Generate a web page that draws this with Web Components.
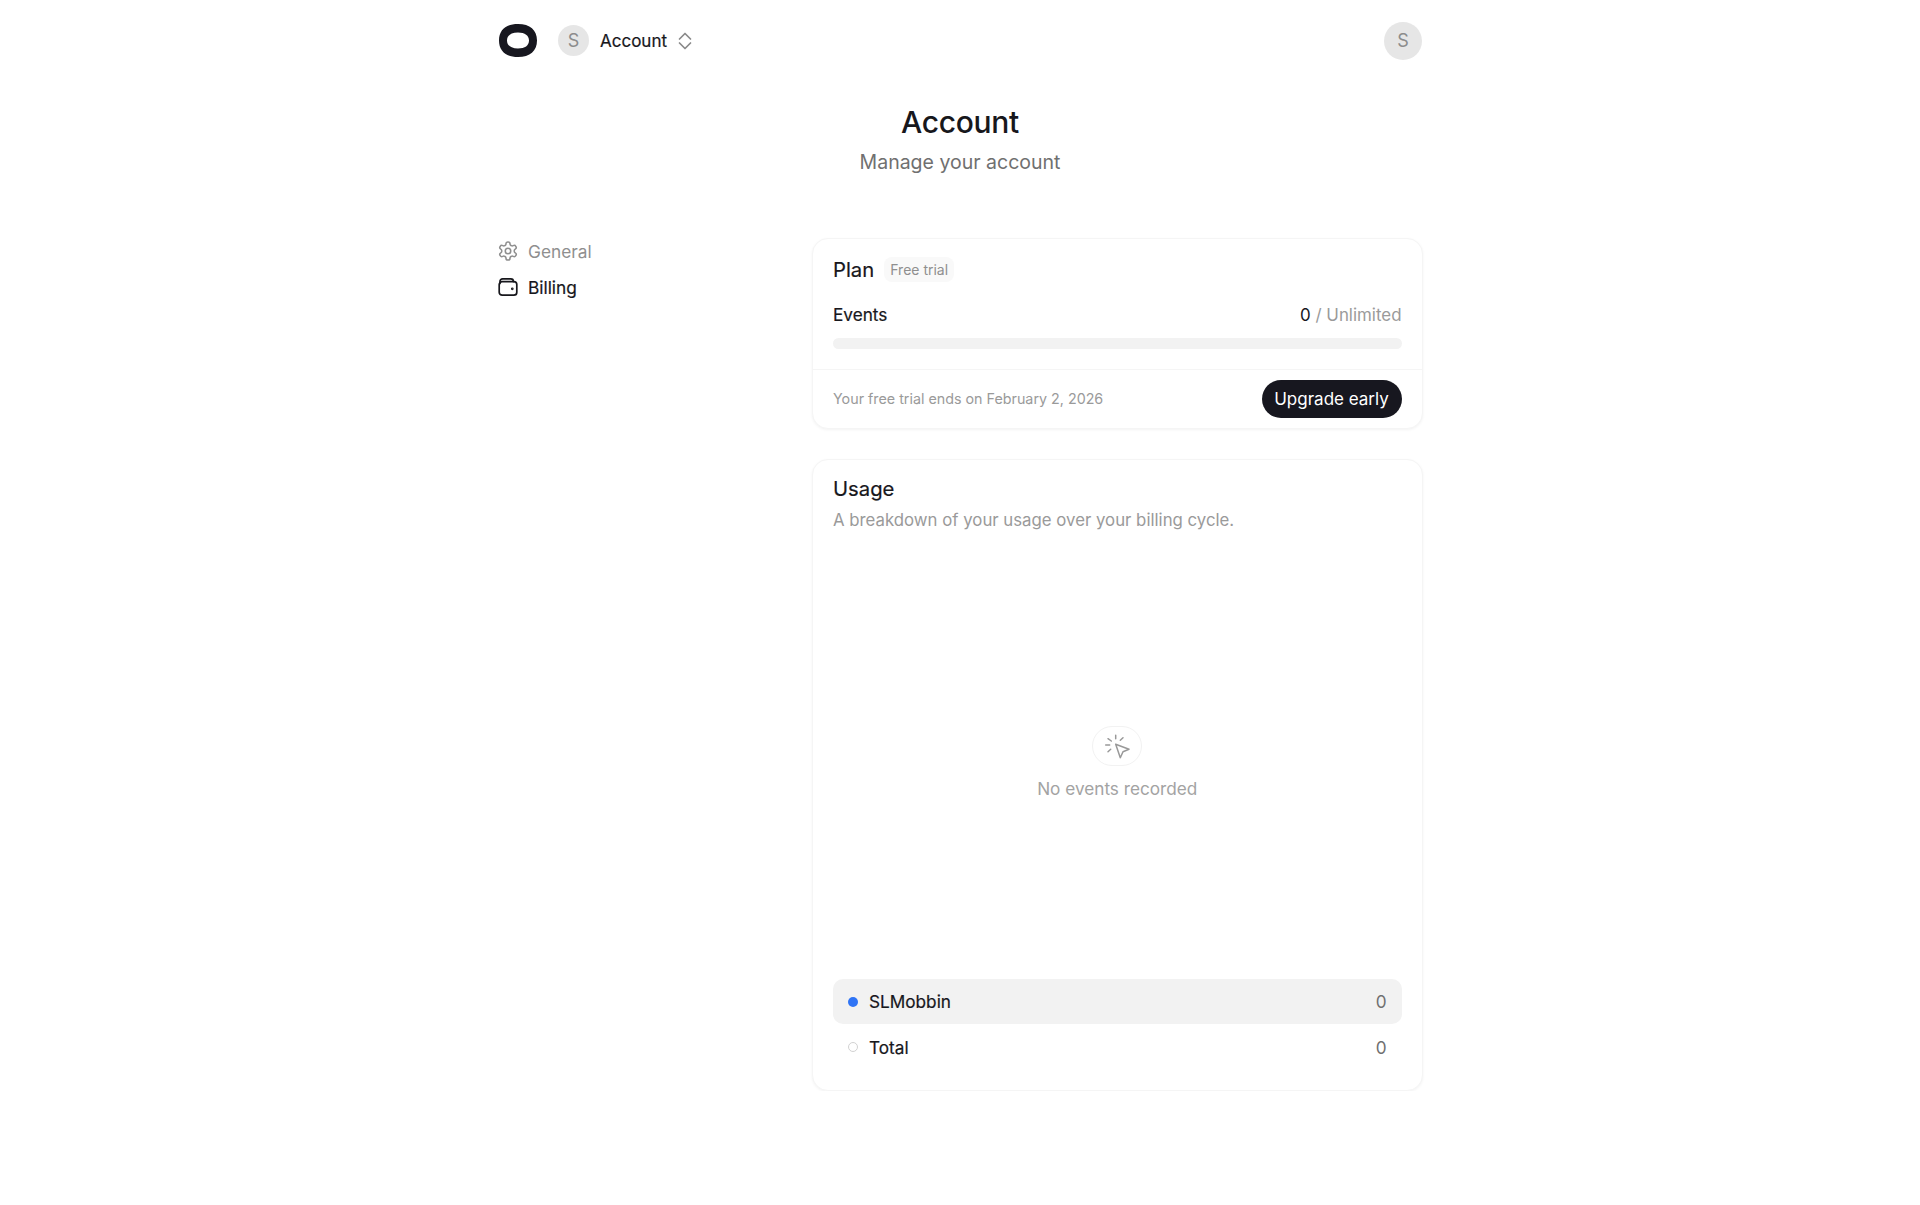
<!DOCTYPE html>
<html>
<head>
<meta charset="utf-8">
<title>Account</title>
<style>
  html, body { margin: 0; background: #fff; }
  body { font-family: Inter, "Liberation Sans", sans-serif; color: #17171c; }
</style>
</head>
<body>
<account-page></account-page>
<script>
class UserAvatar extends HTMLElement {
  constructor() {
    super();
    const size = this.getAttribute("size") || 30;
    this.attachShadow({ mode: "open" }).innerHTML = `
      <style>
        :host {
          display: inline-flex;
          align-items: center;
          justify-content: center;
          width: ${size}px;
          height: ${size}px;
          border-radius: 50%;
          background: #e6e6e6;
          color: #8c8c8c;
          font-size: 18px;
          flex: none;
        }
      </style>
      <slot></slot>
    `;
  }
}
customElements.define("user-avatar", UserAvatar);

class TopBar extends HTMLElement {
  constructor() {
    super();
    this.attachShadow({ mode: "open" }).innerHTML = `
      <style>
        :host {
          display: flex;
          align-items: center;
          height: 81px;
        }
        .logo { width: 38px; height: 33px; flex: none; margin: 0 21px 0 1px; }
        .name { font-size: 17px; margin-left: 11px; -webkit-text-stroke: 0.2px; }
        .chevrons { width: 14px; height: 18px; margin-left: 11px; flex: none; }
        .spacer { flex: 1; }
      </style>
      <svg class="logo" viewBox="0 0 38 33"><path fill="#17171f" fill-rule="evenodd" d="M19 0C31 0 38 6 38 16.500S31 33 19 33 0 27 0 16.500 7 0 19 0ZM19 8.500C12 8.500 8 11.500 8 16.500S12 24.500 19 24.500 30 21.500 30 16.500 26 8.500 19 8.500Z"/></svg>
      <user-avatar size="31">S</user-avatar>
      <span class="name">Account</span>
      <svg class="chevrons" viewBox="0 0 14 18" fill="none" stroke="#8a8a8a" stroke-width="1.700" stroke-linecap="round" stroke-linejoin="round"><path d="M1.500 7 7 1.500 12.500 7M1.500 11 7 16.500 12.500 11"/></svg>
      <span class="spacer"></span>
      <user-avatar size="38">S</user-avatar>
    `;
  }
}
customElements.define("top-bar", TopBar);

class SideNav extends HTMLElement {
  constructor() {
    super();
    this.attachShadow({ mode: "open" }).innerHTML = `
      <style>
        :host {
          display: flex;
          flex-direction: column;
          font-size: 17.300px;
          margin-top: -5px;
        }
        .item { display: flex; align-items: center; height: 36px; gap: 10px; color: #8f8f8f; }
        .item.active { color: #17171c; -webkit-text-stroke: 0.2px; }
        svg { width: 20px; height: 20px; flex: none; fill: none; stroke: currentColor; stroke-width: 1.700; stroke-linecap: round; stroke-linejoin: round; }
      </style>
      <div class="item">
        <svg viewBox="1 1 22 22"><path d="M12.220 2h-.44a2 2 0 0 0-2 2v.18a2 2 0 0 1-1 1.730l-.43.25a2 2 0 0 1-2 0l-.15-.08a2 2 0 0 0-2.730.73l-.22.38a2 2 0 0 0 .73 2.730l.15.1a2 2 0 0 1 1 1.720v.51a2 2 0 0 1-1 1.740l-.15.09a2 2 0 0 0-.73 2.730l.22.38a2 2 0 0 0 2.730.73l.15-.08a2 2 0 0 1 2 0l.43.25a2 2 0 0 1 1 1.730V20a2 2 0 0 0 2 2h.44a2 2 0 0 0 2-2v-.18a2 2 0 0 1 1-1.730l.43-.25a2 2 0 0 1 2 0l.15.08a2 2 0 0 0 2.730-.73l.22-.39a2 2 0 0 0-.73-2.730l-.15-.08a2 2 0 0 1-1-1.740v-.5a2 2 0 0 1 1-1.740l.15-.09a2 2 0 0 0 .73-2.730l-.22-.38a2 2 0 0 0-2.730-.73l-.15.08a2 2 0 0 1-2 0l-.43-.25a2 2 0 0 1-1-1.730V4a2 2 0 0 0-2-2z"/><circle cx="12" cy="12" r="3"/></svg>
        General
      </div>
      <div class="item active">
        <svg viewBox="0 0 20 20"><rect x="1.200" y="4.600" width="17.600" height="13.600" rx="3"/><path d="M2 6.500V4.400A2.600 2.600 0 0 1 4.600 1.800h8.200A2.600 2.600 0 0 1 15.400 4.400v.2"/><circle cx="14.300" cy="11.800" r=".5" fill="currentColor"/></svg>
        Billing
      </div>
    `;
  }
}
customElements.define("side-nav", SideNav);

class PanelCard extends HTMLElement {
  constructor() {
    super();
    this.attachShadow({ mode: "open" }).innerHTML = `
      <style>
        :host {
          display: flex;
          flex-direction: column;
          background: #fff;
          border: 1px solid #f5f5f5;
          border-radius: 16px;
          box-shadow: 0 1px 3px rgba(0, 0, 0, 0.05);
          box-sizing: border-box;
        }
      </style>
      <slot></slot>
    `;
  }
}
customElements.define("panel-card", PanelCard);

class PlanCard extends HTMLElement {
  constructor() {
    super();
    this.attachShadow({ mode: "open" }).innerHTML = `
      <style>
        :host { display: block; }
        panel-card { height: 191px; }
        .body { padding: 0 20px; flex: 1; }
        .title-row { display: flex; align-items: center; height: 30px; margin-top: 15px; gap: 10px; }
        .title { font-size: 20.300px; -webkit-text-stroke: 0.2px; }
        .badge { font-size: 14px; color: #8f8f8f; background: #f9f9f9; border-radius: 8px; padding: 4px 6px; margin-top: 1px; }
        .events { display: flex; justify-content: space-between; align-items: baseline; font-size: 16.900px; height: 24px; margin-top: 20px; }
        .events .label { font-size: 17.200px; -webkit-text-stroke: 0.2px; }
        .muted { color: #9a9a9a; }
        .bar { height: 11px; border-radius: 6px; background: #f2f2f2; margin-top: 10px; }
        .foot { display: flex; justify-content: space-between; align-items: center; height: 59px; padding: 0 20px; border-top: 1px solid #f5f5f5; box-sizing: border-box; }
        .note { font-size: 14.300px; color: #9a9a9a; margin-top: -2px; }
        .button { display: flex; align-items: center; justify-content: center; height: 38px; width: 140px; border-radius: 19px; background: #17171f; color: #fff; font-size: 17px; }
      </style>
      <panel-card>
        <div class="body">
          <div class="title-row"><span class="title">Plan</span><span class="badge">Free trial</span></div>
          <div class="events"><span class="label">Events</span><span>0 <span class="muted">/ Unlimited</span></span></div>
          <div class="bar"></div>
        </div>
        <div class="foot">
          <span class="note">Your free trial ends on February 2, 2026</span>
          <span class="button">Upgrade early</span>
        </div>
      </panel-card>
    `;
  }
}
customElements.define("plan-card", PlanCard);

class LegendRow extends HTMLElement {
  constructor() {
    super();
    const active = this.hasAttribute("active");
    this.attachShadow({ mode: "open" }).innerHTML = `
      <style>
        :host {
          display: flex;
          align-items: center;
          height: ${active ? 45 : 46}px;
          padding: 0 15px;
          border-radius: 10px;
          font-size: 17.200px;
          background: ${active ? "#f2f2f2" : "transparent"};
        }
        .dot { width: 10px; height: 10px; border-radius: 50%; box-sizing: border-box; margin-right: 11px; flex: none;
          ${active ? "background: #2f74f5;" : "border: 1.500px solid #d2d2d2;"} }
        .label { flex: 1; -webkit-text-stroke: 0.2px; }
        .value { color: #707070; }
      </style>
      <span class="dot"></span>
      <span class="label"><slot></slot></span>
      <span class="value">${this.getAttribute("value")}</span>
    `;
  }
}
customElements.define("legend-row", LegendRow);

class UsageCard extends HTMLElement {
  constructor() {
    super();
    this.attachShadow({ mode: "open" }).innerHTML = `
      <style>
        :host { display: block; }
        panel-card { height: 632px; padding: 0 20px; }
        .title { font-size: 20.300px; line-height: 28px; margin-top: 15px; -webkit-text-stroke: 0.2px; }
        .desc { font-size: 16.800px; color: #9a9a9a; line-height: 24px; margin-top: 5px; }
        .empty { flex: 1; display: flex; flex-direction: column; align-items: center; justify-content: center; gap: 12px; padding-top: 13px; }
        .pill { width: 50px; height: 40px; border: 1px solid #f2f2f2; border-radius: 20px; display: flex; align-items: center; justify-content: center; box-sizing: border-box; }
        .pill svg { width: 26px; height: 26px; fill: none; stroke: #999; stroke-width: 1.500; stroke-linecap: round; stroke-linejoin: round; }
        .empty span { font-size: 17.200px; color: #a3a3a3; }
        .legend { margin-bottom: 20px; }
      </style>
      <panel-card>
        <div class="title">Usage</div>
        <div class="desc">A breakdown of your usage over your billing cycle.</div>
        <div class="empty">
          <div class="pill">
            <svg viewBox="0 0 26 26"><path d="M11.700 11.300 25 16.300l-6 2.400-2.700 6z"/><path d="M11.700 2.300v3.400M4 5.700 7.300 8M19 4.700l-2.700 2.600M1.700 12h4M4 18.700l2.700-2.400"/></svg>
          </div>
          <span>No events recorded</span>
        </div>
        <div class="legend">
          <legend-row active value="0">SLMobbin</legend-row>
          <legend-row value="0">Total</legend-row>
        </div>
      </panel-card>
    `;
  }
}
customElements.define("usage-card", UsageCard);

class AccountPage extends HTMLElement {
  constructor() {
    super();
    this.attachShadow({ mode: "open" }).innerHTML = `
      <style>
        :host { display: block; width: 924px; margin: 0 auto; }
        header { text-align: center; padding-top: 20px; height: 135px; box-sizing: border-box; }
        h1 { margin: 0; font-size: 30px; font-weight: 500; line-height: 42px; letter-spacing: -0.3px; }
        p { margin: 0; font-size: 19.500px; line-height: 28px; color: #707070; margin-top: 5px; }
        .columns { display: grid; grid-template-columns: 314px 610.500px; margin-top: 22px; }
        .cards { display: flex; flex-direction: column; gap: 30px; }
      </style>
      <top-bar></top-bar>
      <header>
        <h1>Account</h1>
        <p>Manage your account</p>
      </header>
      <div class="columns">
        <side-nav></side-nav>
        <div class="cards">
          <plan-card></plan-card>
          <usage-card></usage-card>
        </div>
      </div>
    `;
  }
}
customElements.define("account-page", AccountPage);
</script>
</body>
</html>
